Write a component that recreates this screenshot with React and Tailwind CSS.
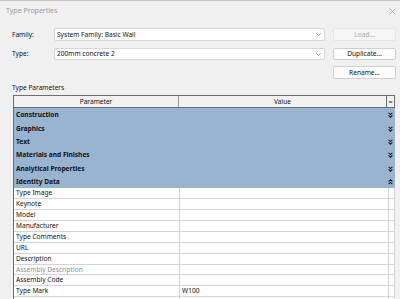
import React from 'react';

const font = { fontFamily: '"Noto Sans", "Open Sans", sans-serif' };

const groups = [
  { name: 'Construction', open: false },
  { name: 'Graphics', open: false },
  { name: 'Text', open: false },
  { name: 'Materials and Finishes', open: false },
  { name: 'Analytical Properties', open: false },
  { name: 'Identity Data', open: true },
];

const params = [
  { name: 'Type Image', value: '' },
  { name: 'Keynote', value: '' },
  { name: 'Model', value: '' },
  { name: 'Manufacturer', value: '' },
  { name: 'Type Comments', value: '' },
  { name: 'URL', value: '' },
  { name: 'Description', value: '' },
  { name: 'Assembly Description', value: '', disabled: true },
  { name: 'Assembly Code', value: '' },
  { name: 'Type Mark', value: 'W100' },
  { name: '', value: '' },
];

function Chevrons({ up }) {
  return (
    <svg width="5" height="6" viewBox="0 0 5 6" className={up ? 'rotate-180' : ''}>
      <polyline points="0.6,0.8 2.5,2.6 4.4,0.8" fill="none" stroke="#1a1a1a" strokeWidth="1.1" />
      <polyline points="0.6,3.4 2.5,5.2 4.4,3.4" fill="none" stroke="#1a1a1a" strokeWidth="1.1" />
    </svg>
  );
}

function Combo({ text, h }) {
  return (
    <div className={`flex w-[271px] ${h} items-center justify-between rounded-[2px] border border-[#d6d6d6] bg-white pl-[2px] pr-[3px]`}>
      <span className="text-[6.6px] text-[#111]">{text}</span>
      <svg width="5" height="3" viewBox="0 0 5 3">
        <polyline points="0.3,0.3 2.5,2.5 4.7,0.3" fill="none" stroke="#777" strokeWidth="0.7" />
      </svg>
    </div>
  );
}

function Btn({ label, disabled, h }) {
  return (
    <div
      className={`flex w-[63px] ${h} items-center justify-center rounded-[2px] border text-[6.6px] ${
        disabled ? 'border-[#e6e6e6] bg-[#f5f5f5] text-[#a8a8a8]' : 'border-[#d0d0d0] bg-[#fdfdfd] text-[#111]'
      }`}
    >
      {label}
    </div>
  );
}

export default function App() {
  return (
    <div className="h-[299px] w-[400px] overflow-hidden border-t border-[#c4c4c4] bg-[#f0f0f0]" style={font}>
      {/* Title bar */}
      <div className="flex h-[21px] items-center justify-between pl-[6px] pr-[4px]">
        <span className="text-[7px] text-[#9a9a9a]">Type Properties</span>
        <svg width="7" height="7" viewBox="0 0 7 7">
          <path d="M0.5 0.5 L6.5 6.5 M6.5 0.5 L0.5 6.5" stroke="#9a9a9a" strokeWidth="0.7" />
        </svg>
      </div>

      <div className="pl-[12px] pr-[4px]">
        <div className="mt-[6px] flex items-center">
          <span className="w-[42px] text-[6.6px] text-[#111]">Family:</span>
          <Combo text="System Family: Basic Wall" h="h-[13px]" />
          <div className="ml-[8px]">
            <Btn label="Load..." disabled h="h-[13px]" />
          </div>
        </div>
        <div className="mt-[7px] flex items-center">
          <span className="w-[42px] text-[6.6px] text-[#111]">Type:</span>
          <Combo text="200mm concrete 2" h="h-[12px]" />
          <div className="ml-[8px]">
            <Btn label="Duplicate..." h="h-[12px]" />
          </div>
        </div>
        <div className="mt-[6px] flex justify-end">
          <Btn label="Rename..." h="h-[13px]" />
        </div>
        <div className="mt-[4px] text-[6.6px] leading-[10px] text-[#111]">Type Parameters</div>
      </div>

      {/* Table */}
      <div className="ml-[13px] mt-[2px] w-[382px]">
        <div className="flex h-[13px] border border-[#6e6e6e] bg-[#f2f2f2] text-[6.6px] text-[#111]">
          <div className="flex w-[165px] items-center justify-center border-r border-[#9a9a9a]">Parameter</div>
          <div className="flex flex-1 items-center justify-center border-r border-[#6e6e6e]">Value</div>
          <div className="flex w-[7px] items-center justify-center text-[7px] leading-none">=</div>
        </div>

        <div className="border-l border-[#6e6e6e] bg-[#99b4d1]">
          {groups.map((g) => (
            <div key={g.name} className="flex h-[13.4px] items-center justify-between pl-[2px] pr-[2px] pt-[1px]">
              <span className="text-[6.6px] font-bold text-[#111]">{g.name}</span>
              <Chevrons up={g.open} />
            </div>
          ))}
        </div>

        <div className="border-l border-[#6e6e6e] bg-white">
          {params.map((p, i) => (
            <div key={i} className="flex h-[10.9px] border-b border-[#d4d4d4] text-[6.6px] leading-[10px]">
              <div className={`w-[165px] pl-[2px] ${p.disabled ? 'text-[#8c8c8c]' : 'text-[#111]'}`}>{p.name}</div>
              <div className="flex-1 border-l border-[#d4d4d4] pl-[2px] text-[#111]">{p.value}</div>
              <div className="w-[7px] border-x border-[#d4d4d4]"></div>
            </div>
          ))}
        </div>
      </div>
    </div>
  );
}
